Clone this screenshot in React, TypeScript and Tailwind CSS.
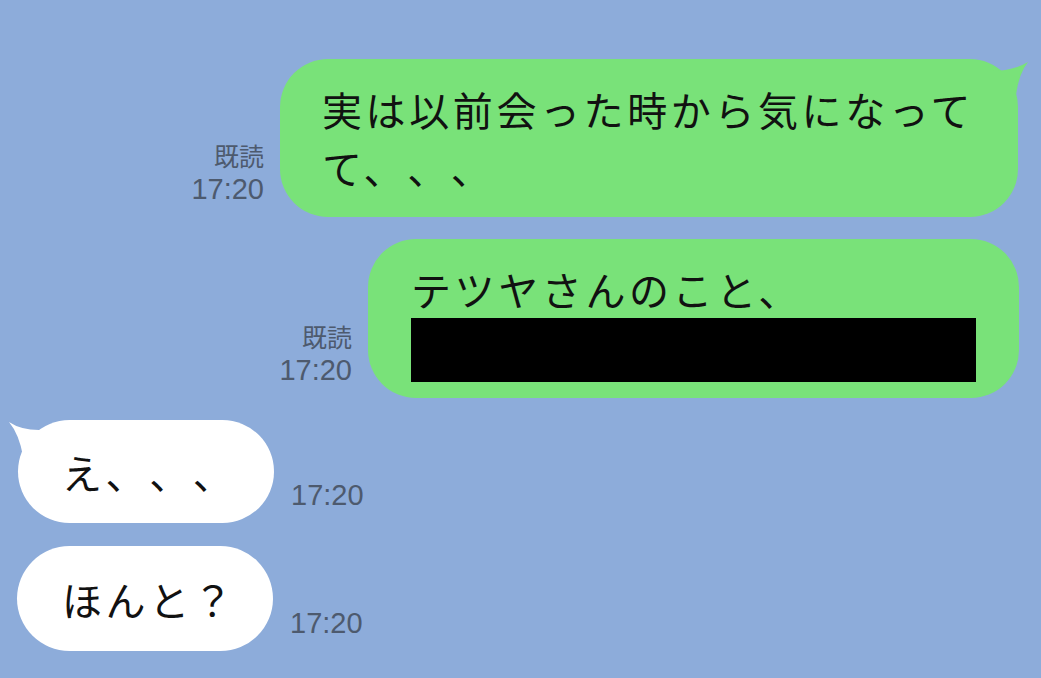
const jp = { fontFamily: '"Noto Sans CJK JP", "Noto Sans", sans-serif' };
const num = { fontFamily: '"Liberation Sans", Arial, sans-serif' };

function ReadMark({ read }: { read?: boolean }) {
  return (
    <div className="mb-[11px] flex flex-col items-end text-[#4d5a6e]">
      {read && (
        <span className="text-[25px] leading-[34px]" style={jp}>
          既読
        </span>
      )}
      <span className="text-[29px] leading-[34px]" style={num}>
        17:20
      </span>
    </div>
  );
}

function GreenTail() {
  return (
    <svg
      className="absolute right-[-11px] top-0"
      width="40"
      height="40"
      viewBox="0 0 40 40"
    >
      <path d="M2 12 Q24 12 39 3 Q30 14 27 36 L2 36 Z" fill="#79e279" />
    </svg>
  );
}

function WhiteTail() {
  return (
    <svg
      className="absolute left-[-12px] top-0"
      width="48"
      height="40"
      viewBox="0 0 48 40"
    >
      <path d="M3 2 Q15 10 33 10 L42 36 L17 36 Q13 14 3 2 Z" fill="#ffffff" />
    </svg>
  );
}

const msg = "text-[40px] text-[#111] tracking-[3.6px] [text-spacing-trim:space-all]";

export default function App() {
  return (
    <main className="h-[678px] w-[1041px] overflow-hidden bg-[#8dacda]">
      <div className="flex flex-col pt-[59px]">
        {/* sent 1 */}
        <div className="flex items-end justify-end pr-[23px]">
          <ReadMark read />
          <div
            className={`relative ml-[16px] w-[738px] rounded-[48px] bg-[#79e279] px-[42px] py-[21px] leading-[58px] ${msg}`}
            style={jp}
          >
            <GreenTail />
            <span className="relative whitespace-nowrap">
              実は以前会った時から気になって
              <br />
              て、、、
            </span>
          </div>
        </div>

        {/* sent 2 */}
        <div className="mt-[22px] flex items-end justify-end pr-[22px]">
          <ReadMark read />
          <div
            className={`ml-[16px] rounded-[48px] bg-[#79e279] pb-[16px] pl-[43px] pr-[43px] pt-[21px] leading-[58px] ${msg}`}
            style={jp}
          >
            <div className="whitespace-nowrap">テツヤさんのこと、</div>
            <div className="h-[64px] w-[565px] bg-black" />
          </div>
        </div>

        {/* received 1 */}
        <div className="mt-[22px] flex items-end pl-[18px]">
          <div
            className={`relative flex h-[103px] w-[256px] items-center rounded-full bg-white pl-[44px] ${msg}`}
            style={jp}
          >
            <WhiteTail />
            <span className="relative">え、、、</span>
          </div>
          <div className="ml-[17px]">
            <ReadMark />
          </div>
        </div>

        {/* received 2 */}
        <div className="mt-[23px] flex items-end pl-[17px]">
          <div
            className={`flex h-[105px] w-[256px] items-center rounded-full bg-white pl-[45px] ${msg}`}
            style={jp}
          >
            ほんと？
          </div>
          <div className="ml-[17px]">
            <ReadMark />
          </div>
        </div>
      </div>
    </main>
  );
}
